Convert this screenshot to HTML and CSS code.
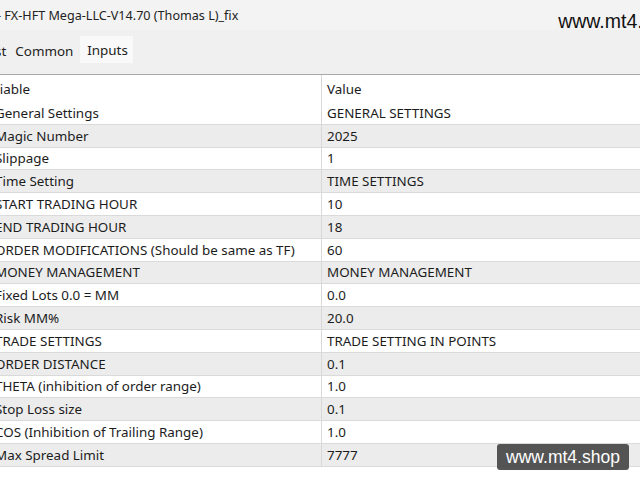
FILE: index.html
```html
<!DOCTYPE html>
<html lang="en">
<head>
  <meta charset="UTF-8" />
  <title>FX-HFT Mega-LLC-V14.70 (Thomas L)_fix</title>
  <link rel="stylesheet" href="styles.css">
</head>
<body>

<div class="titlebar">
  <span class="title">- FX-HFT Mega-LLC-V14.70 (Thomas L)_fix</span>
  <span class="site">www.mt4.shop</span>
</div>

<div class="tabs">
  <div class="tab cut">Test</div>
  <div class="tab">Common</div>
  <div class="tab active">Inputs</div>
</div>

<div class="grid">
  <div class="row head"><div class="name">Variable</div><div class="val">Value</div></div>
  <div class="row"><div class="name">General Settings</div><div class="val">GENERAL SETTINGS</div></div>
  <div class="row"><div class="name">Magic Number</div><div class="val">2025</div></div>
  <div class="row"><div class="name">Slippage</div><div class="val">1</div></div>
  <div class="row"><div class="name">Time Setting</div><div class="val">TIME SETTINGS</div></div>
  <div class="row"><div class="name">START TRADING HOUR</div><div class="val">10</div></div>
  <div class="row"><div class="name">END TRADING HOUR</div><div class="val">18</div></div>
  <div class="row"><div class="name">ORDER MODIFICATIONS (Should be same as TF)</div><div class="val">60</div></div>
  <div class="row"><div class="name">MONEY MANAGEMENT</div><div class="val">MONEY MANAGEMENT</div></div>
  <div class="row"><div class="name">Fixed Lots 0.0 = MM</div><div class="val">0.0</div></div>
  <div class="row"><div class="name">Risk MM%</div><div class="val">20.0</div></div>
  <div class="row"><div class="name">TRADE SETTINGS</div><div class="val">TRADE SETTING IN POINTS</div></div>
  <div class="row"><div class="name">ORDER DISTANCE</div><div class="val">0.1</div></div>
  <div class="row"><div class="name">THETA (inhibition of order range)</div><div class="val">1.0</div></div>
  <div class="row"><div class="name">Stop Loss size</div><div class="val">0.1</div></div>
  <div class="row"><div class="name">COS (Inhibition of Trailing Range)</div><div class="val">1.0</div></div>
  <div class="row"><div class="name">Max Spread Limit</div><div class="val">7777</div></div>
</div>

<div class="badge">www.mt4.shop</div>

</body>
</html>
```

FILE: styles.css
```css
body {
  font-family: 'Noto Sans', sans-serif;
  font-size: 13.4px;
  color: #1c1c1c;
  background: #fff;
  margin: 0;
  padding: 0;
  width: 640px;
  height: 480px;
  overflow: hidden;
  position: relative;
}

.titlebar {
  height: 30px;
  background: #f3f3f3;
  display: flex;
  align-items: center;
  justify-content: space-between;
  white-space: nowrap;
  overflow: hidden;
}

.title {
  margin-left: -3px;
  font-size: 12.6px;
  color: #222;
}

.site {
  font-family: 'Liberation Sans', sans-serif;
  font-size: 19.5px;
  color: #111;
  margin-right: -45px;
  margin-top: 12px;
}

.tabs {
  background: #f0f0f0;
  border-bottom: 1px solid #a9a9a9;
  display: flex;
  align-items: flex-start;
  padding-top: 6px;
  box-sizing: border-box;
  height: 45px;
}

.tab {
  height: 27px;
  padding: 0 3px 0 5px;
  display: flex;
  align-items: center;
  padding-top: 3px;
  box-sizing: border-box;
  color: #222;
}

.tab.cut {
  margin-left: -24px;
  padding-right: 4px;
}

.tab.active {
  background: #f9f9f9;
  padding: 0 7px;
  margin-left: 4px;
  width: 53px;
}

.grid {
  background: #fff;
}

.row {
  display: flex;
  height: 22.8px;
  border-bottom: 1px solid #dadada;
  box-sizing: border-box;
  align-items: center;
  white-space: nowrap;
}

.row.head {
  height: 27px;
  border-bottom: none;
}

.row:nth-child(odd):not(.head) {
  background: #ececec;
}

.name {
  width: 327px;
  margin-left: -5px;
  height: 100%;
  display: flex;
  align-items: center;
  border-right: 1px solid #d8d8d8;
  box-sizing: border-box;
  overflow: hidden;
}

.head .name {
  margin-left: -21px;
  width: 343px;
}

.val {
  padding-left: 5px;
}

.badge {
  position: absolute;
  left: 497px;
  top: 444px;
  width: 132px;
  height: 26px;
  background: rgba(70, 70, 70, 0.92);
  color: #fff;
  font-family: 'Liberation Sans', sans-serif;
  font-size: 17.5px;
  border-radius: 3px;
  display: flex;
  align-items: center;
  justify-content: center;
}
```
